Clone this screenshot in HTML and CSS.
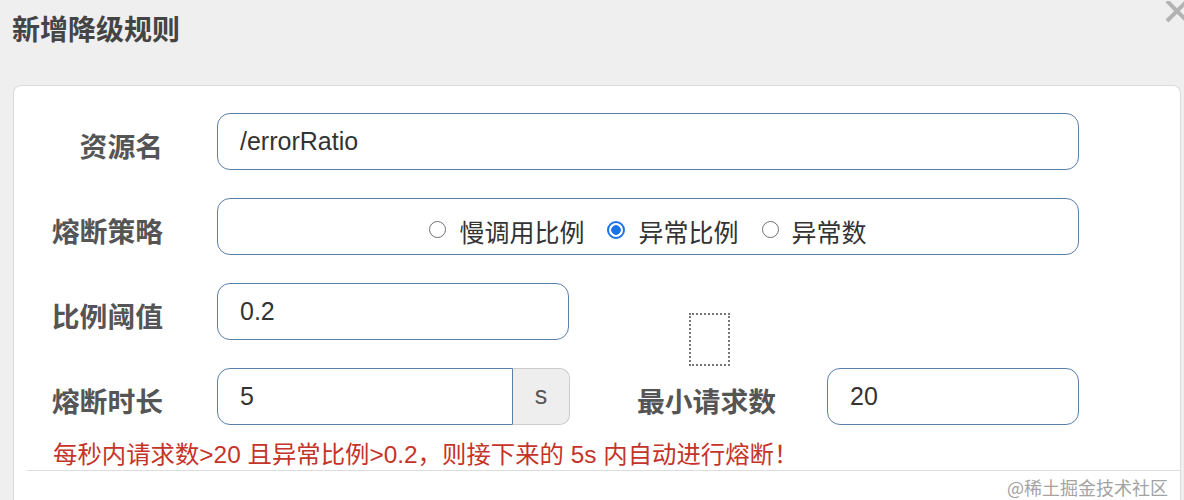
FILE: index.html
```html
<!DOCTYPE html>
<html lang="zh">
<head>
<meta charset="utf-8">
<link rel="stylesheet" href="styles.css">
</head>
<body>
<div class="modal">
  <header class="modal-head">
    <h4 class="title">新增降级规则</h4>
    <svg class="close" width="24" height="24" viewBox="0 0 24 24"><path d="M2 0 L22 20 M22 0 L2 20" stroke="#b3b3b3" stroke-width="4" fill="none"/></svg>
  </header>
  <section class="panel">
    <div class="row">
      <label class="lbl">资源名</label>
      <div class="ctl wide"><span class="val">/errorRatio</span></div>
    </div>
    <div class="row">
      <label class="lbl">熔断策略</label>
      <div class="ctl wide radios">
        <span class="opt"><i class="radio"></i>慢调用比例</span>
        <span class="opt"><i class="radio on"></i>异常比例</span>
        <span class="opt"><i class="radio"></i>异常数</span>
      </div>
    </div>
    <div class="row">
      <label class="lbl">比例阈值</label>
      <div class="ctl half"><span class="val">0.2</span></div>
    </div>
    <div class="row">
      <label class="lbl">熔断时长</label>
      <div class="group">
        <div class="ctl gin"><span class="val">5</span></div>
        <span class="addon">s</span>
      </div>
      <label class="lbl2">最小请求数<span class="dotbox"></span></label>
      <div class="ctl small"><span class="val">20</span></div>
    </div>
    <p class="hint">每秒内请求数&gt;20 且异常比例&gt;0.2，则接下来的 5s 内自动进行熔断！</p>
    <hr class="divider">
  </section>
  <span class="mark">@稀土掘金技术社区</span>
</div>
</body>
</html>
```

FILE: styles.css
```css
html, body {
  margin: 0;
  padding: 0;
  background: #efefef;
  overflow: hidden;
}
body {
  width: 1184px;
  height: 500px;
  font-family: "Liberation Sans", "Noto Sans CJK SC", sans-serif;
  color: #333;
}
.modal {
  position: relative;
  height: 500px;
}
.modal-head {
  height: 85px;
  padding: 0 0 0 12px;
  box-sizing: border-box;
}
.title {
  margin: 0;
  padding-top: 10px;
  font-family: "Noto Sans CJK SC", sans-serif;
  font-size: 28px;
  line-height: 36px;
  font-weight: 700;
  color: #444;
}
.close {
  position: absolute;
  left: 1165px;
  top: 1px;
}
.panel {
  margin-left: 13px;
  width: 1168px;
  height: 440px;
  box-sizing: border-box;
  background: #fff;
  border: 1px solid #dcdcdc;
  border-bottom: none;
  border-radius: 8px 8px 0 0;
  padding: 27px 0 0 13px;
}
.row {
  display: flex;
  align-items: center;
  height: 57px;
  margin-bottom: 28px;
}
.lbl, .lbl2 {
  font-family: "Noto Sans CJK SC", sans-serif;
  font-weight: 700;
  font-size: 27.8px;
  color: #555;
  padding-top: 6px;
}
.lbl {
  width: 136px;
  text-align: right;
  margin-right: 54px;
  flex: none;
}
.lbl2 {
  position: relative;
  width: 206px;
  text-align: right;
  margin-right: 51px;
  flex: none;
}
.ctl {
  height: 57px;
  box-sizing: border-box;
  border: 1px solid #5a7fa9;
  border-radius: 13px;
  display: flex;
  align-items: center;
  padding-left: 22px;
  background: #fff;
}
.val {
  font-size: 25px;
  color: #333;
}
.wide { width: 862px; }
.half { width: 352px; }
.small { width: 252px; }
.radios {
  justify-content: center;
  padding-left: 0;
  padding-top: 8px;
  gap: 23px;
  font-family: "Noto Sans CJK SC", sans-serif;
  font-size: 25px;
  color: #333;
}
.opt {
  display: flex;
  align-items: center;
}
.radio {
  width: 17px;
  height: 17px;
  border: 1.5px solid #707070;
  border-radius: 50%;
  margin-right: 13px;
  box-sizing: border-box;
  margin-top: -2px;
}
.radio.on {
  border: 2px solid #1a73e8;
  background: radial-gradient(circle, #1a73e8 0 4.5px, #fff 5px);
  width: 18px;
  height: 18px;
}
.group {
  display: flex;
  width: 353px;
  height: 57px;
  flex: none;
}
.gin {
  flex: 1;
  border-radius: 13px 0 0 13px;
}
.addon {
  width: 57px;
  box-sizing: border-box;
  border: 1px solid #ccc;
  border-left: none;
  border-radius: 0 10px 10px 0;
  background: #eee;
  display: flex;
  align-items: center;
  justify-content: center;
  font-size: 25px;
  color: #555;
  padding-bottom: 2px;
}
.dotbox {
  position: absolute;
  left: 119px;
  top: -61px;
  width: 41px;
  height: 53px;
  box-sizing: border-box;
  border: 2px dotted #777;
}
.hint {
  margin: -13px 0 0 26px;
  font-family: "Liberation Sans", "Noto Sans CJK SC", sans-serif;
  font-size: 24.4px;
  line-height: 30px;
  color: #c4342a;
}
.divider {
  border: none;
  border-top: 1px solid #ddd;
  margin: 0;
}
.mark {
  position: absolute;
  left: 1007px;
  top: 475px;
  font-family: "Noto Sans CJK SC", sans-serif;
  font-size: 18px;
  line-height: 24px;
  color: #a3a3a3;
}
```
